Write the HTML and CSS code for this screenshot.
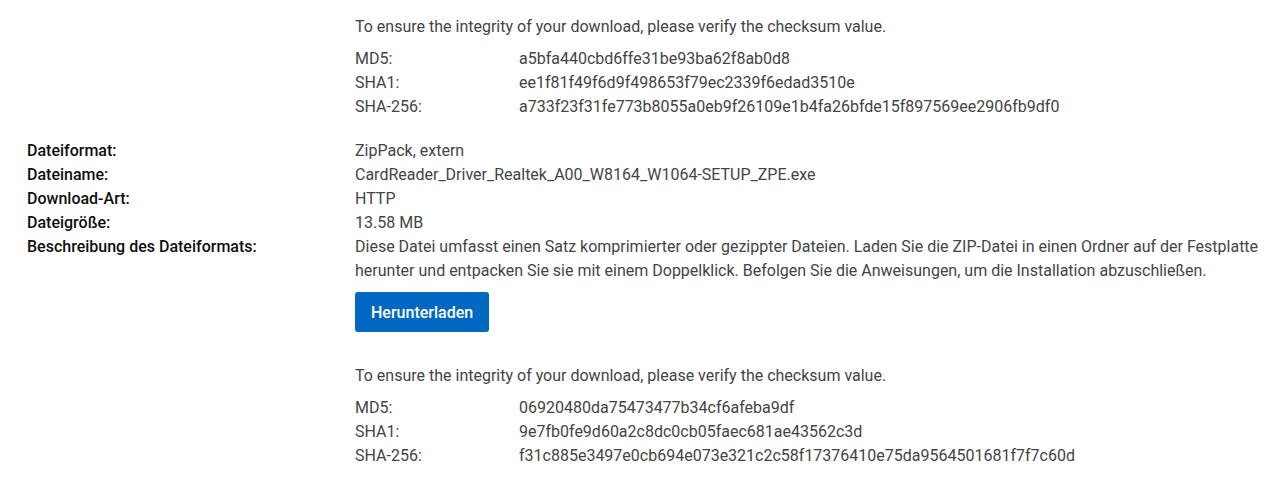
FILE: index.html
```html
<!DOCTYPE html>
<html lang="de">
<head>
  <meta charset="UTF-8">
  <meta name="viewport" content="width=device-width, initial-scale=1.0">
  <title>Treiberdetails</title>
  <link rel="stylesheet" href="styles.css">
</head>
<body>
  <div class="file-details">
    <div class="row">
      <div class="label"></div>
      <div class="value">
        <div class="checksum">
          <p class="checksum-note">To ensure the integrity of your download, please verify the checksum value.</p>
          <div class="hash"><span>MD5:</span><span>a5bfa440cbd6ffe31be93ba62f8ab0d8</span></div>
          <div class="hash"><span>SHA1:</span><span>ee1f81f49f6d9f498653f79ec2339f6edad3510e</span></div>
          <div class="hash"><span>SHA-256:</span><span>a733f23f31fe773b8055a0eb9f26109e1b4fa26bfde15f897569ee2906fb9df0</span></div>
        </div>
      </div>
    </div>

    <div class="info">
      <div class="row"><div class="label">Dateiformat:</div><div class="value">ZipPack, extern</div></div>
      <div class="row"><div class="label">Dateiname:</div><div class="value">CardReader_Driver_Realtek_A00_W8164_W1064-SETUP_ZPE.exe</div></div>
      <div class="row"><div class="label">Download-Art:</div><div class="value">HTTP</div></div>
      <div class="row"><div class="label">Dateigröße:</div><div class="value">13.58 MB</div></div>
      <div class="row">
        <div class="label">Beschreibung des Dateiformats:</div>
        <div class="value">
          Diese Datei umfasst einen Satz komprimierter oder gezippter Dateien. Laden Sie die ZIP-Datei in einen Ordner auf der Festplatte herunter und entpacken Sie sie mit einem Doppelklick. Befolgen Sie die Anweisungen, um die Installation abzuschließen.
          <button class="download-btn">Herunterladen</button>
          <div class="checksum">
            <p class="checksum-note">To ensure the integrity of your download, please verify the checksum value.</p>
            <div class="hash"><span>MD5:</span><span>06920480da75473477b34cf6afeba9df</span></div>
            <div class="hash"><span>SHA1:</span><span>9e7fb0fe9d60a2c8dc0cb05faec681ae43562c3d</span></div>
            <div class="hash"><span>SHA-256:</span><span>f31c885e3497e0cb694e073e321c2c58f17376410e75da9564501681f7f7c60d</span></div>
          </div>
        </div>
      </div>
    </div>
  </div>
</body>
</html>
```

FILE: styles.css
```css
body {
  margin: 0;
  font-family: Roboto, "Liberation Sans", sans-serif;
  font-size: 16px;
  line-height: 24px;
  color: #444;
  background: #fff;
}
.file-details {
  padding: 15px 12px 0 27px;
}
.row {
  display: grid;
  grid-template-columns: 328px 1fr;
}
.label {
  color: #0e0e0e;
  font-weight: 500;
}
.checksum-note {
  margin: 0 0 8px;
}
.hash {
  display: grid;
  grid-template-columns: 164px 1fr;
}
.info {
  margin-top: 20px;
}
.download-btn {
  display: block;
  margin: 9px 0 32px;
  height: 40px;
  padding: 0 16px;
  background-color: #0068c0;
  color: #fff;
  border: none;
  border-radius: 3px;
  font-family: inherit;
  font-size: 16px;
  font-weight: 500;
  cursor: pointer;
}
.download-btn:hover {
  background-color: #00468b;
}
```
